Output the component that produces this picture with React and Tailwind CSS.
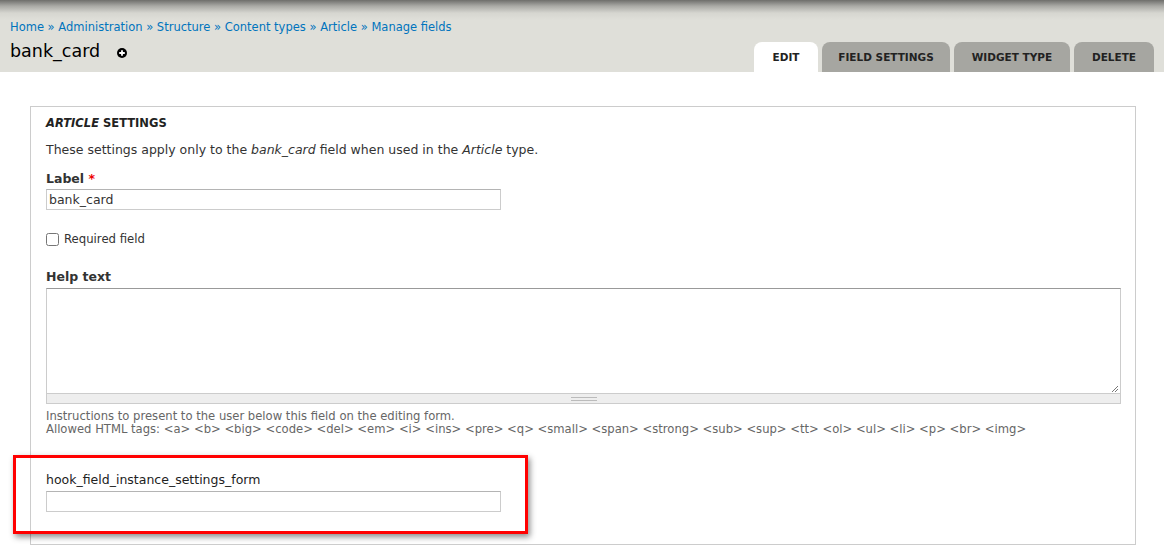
import { useState } from "react";

const CRUMBS = ["Home", "Administration", "Structure", "Content types", "Article", "Manage fields"];
const TABS = [
    { label: "EDIT", w: "w-[64px]", active: true },
    { label: "FIELD SETTINGS", w: "w-[128px]" },
    { label: "WIDGET TYPE", w: "w-[116px]" },
    { label: "DELETE", w: "w-[80px]" },
];
const TAGS = "<a> <b> <big> <code> <del> <em> <i> <ins> <pre> <q> <small> <span> <strong> <sub> <sup> <tt> <ol> <ul> <li> <p> <br> <img>";

export default function App() {
    const [label, setLabel] = useState("bank_card");
    const [required, setRequired] = useState(false);
    const [help, setHelp] = useState("");
    const [hook, setHook] = useState("");

    return (
        <div className="min-h-screen bg-white font-['DejaVu_Sans',sans-serif] text-[12.5px] text-[#333]">
            <header className="h-[72px] flex justify-between pl-[10px] pr-[10px] bg-[linear-gradient(to_bottom,#6e6e6b_0px,#a9a9a5_6px,#d6d6d0_13px,#dfdfd9_20px)]">
                <div className="pt-[18px]">
                    <div className="text-[11.5px] leading-[18px] text-[#0074bd]">
                        {CRUMBS.map((c, i) => (
                            <span key={c}>
                                {i > 0 && <span> » </span>}
                                <a href="#" className="hover:underline">{c}</a>
                            </span>
                        ))}
                    </div>
                    <h1 className="mt-[3px] flex items-center text-[17.5px] leading-[24px] text-[#000]">
                        bank_card
                        <span className="ml-[17px] mt-[4px] w-[10px] h-[10px] rounded-full bg-black flex items-center justify-center">
                            <svg viewBox="0 0 10 10" className="w-[10px] h-[10px]">
                                <path d="M5 2.2v5.6M2.2 5h5.6" stroke="#fff" strokeWidth="1.8" />
                            </svg>
                        </span>
                    </h1>
                </div>
                <ul className="self-end flex gap-[4px]">
                    {TABS.map((t) => (
                        <li key={t.label}
                            className={`${t.w} h-[30px] pt-[2px] flex items-center justify-center rounded-t-[8px] text-[10.5px] font-bold text-[#222] ${t.active ? "bg-white" : "bg-[#a6a6a1]"}`}>
                            {t.label}
                        </li>
                    ))}
                </ul>
            </header>

            <main className="pl-[30px] pr-[28px] pt-[34px] relative">
                <fieldset className="border border-[#ccc] pl-[15px] pr-[14px] pt-[8px] pb-[32px]">
                    <div className="text-[11.5px] leading-[16px] font-semibold text-[#222]">
                        <em>ARTICLE</em> SETTINGS
                    </div>
                    <p className="mt-[11px] leading-[16px]">
                        These settings apply only to the <em>bank_card</em> field when used in the <em>Article</em> type.
                    </p>

                    <label className="block mt-[13px] font-bold leading-[16px] text-[#333]">
                        Label <span className="text-[#e00]">*</span>
                    </label>
                    <input value={label} onChange={(e) => setLabel(e.target.value)}
                        className="mt-[2px] block w-[455px] h-[21px] border border-[#ccc] border-t-[#b4b4b4] px-[2px] text-[12.5px] text-[#333] outline-none" />

                    <label className="mt-[21px] flex items-center gap-[5px] text-[11.7px] leading-[16px]">
                        <input type="checkbox" checked={required} onChange={(e) => setRequired(e.target.checked)}
                            className="w-[13px] h-[13px] m-0 accent-[#0074bd]" />
                        Required field
                    </label>

                    <label className="block mt-[22px] font-bold leading-[16px]">Help text</label>
                    <div className="mt-[3px] border border-[#ccc] border-t-[#999]">
                        <textarea value={help} onChange={(e) => setHelp(e.target.value)}
                            className="block w-full h-[104px] resize-none outline-none px-[2px] text-[12.5px]" />
                        <div className="relative h-[10px] bg-[#eee] border-t border-[#ccc] flex items-center justify-center">
                            <div className="w-[26px] h-[4px] border-y border-[#bbb]" />
                            <svg viewBox="0 0 10 10" className="absolute right-[1px] -top-[11px] w-[10px] h-[10px]">
                                <path d="M9 3L3 9M9 6L6 9" stroke="#777" strokeWidth="1" />
                            </svg>
                        </div>
                    </div>
                    <div className="mt-[6px] text-[11.6px] leading-[13px] text-[#666]">
                        <div>Instructions to present to the user below this field on the editing form.</div>
                        <div>Allowed HTML tags: {TAGS}</div>
                    </div>

                    <label className="block mt-[36px] leading-[16px] font-medium text-[#222]">hook_field_instance_settings_form</label>
                    <input value={hook} onChange={(e) => setHook(e.target.value)}
                        className="mt-[3px] block w-[455px] h-[21px] border border-[#ccc] border-t-[#b4b4b4] px-[2px] text-[12.5px] outline-none" />
                </fieldset>

                <div className="absolute left-[13px] top-[383px] w-[515px] h-[79px] border-[3px] border-[#f00] shadow-[2px_3px_6px_rgba(0,0,0,0.45)] pointer-events-none" />
            </main>
        </div>
    );
}
